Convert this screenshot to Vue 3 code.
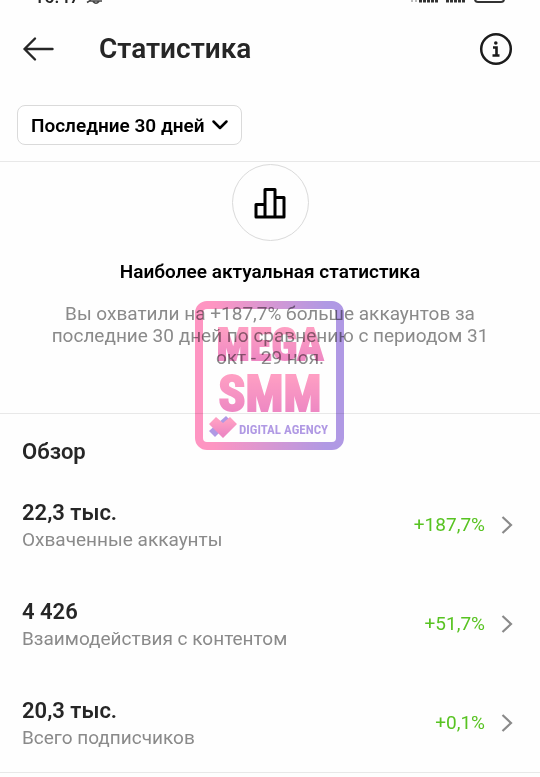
<template>
  <main class="page">
    <div class="status-bar">
      <span class="status-time">16:47</span>
      <svg class="status-bell" width="18" height="5" viewBox="0 0 18 5" fill="none" stroke="#444">
        <path d="M1 2.500L5 0M3 1H16M7 1.500Q10 5 13 1.500" stroke-width="1.500"/>
      </svg>
      <svg class="status-icons" width="98" height="5" viewBox="0 0 98 5" fill="none">
        <path d="M2 0V2M6 0V2" stroke="#bbb" stroke-width="2"/>
        <path d="M9 1H29M36 1H56" stroke="#333" stroke-width="3" stroke-dasharray="3 1"/>
        <path d="M65 -4V-1Q65 2 68 2H91Q94 2 94 -1V-4" stroke="#333" stroke-width="2"/>
      </svg>
    </div>

    <header class="header">
      <button class="icon-btn" type="button" aria-label="Назад">
        <svg width="32" height="26" viewBox="0 0 32 26" fill="none" stroke="#262626" stroke-width="2.400" stroke-linecap="round" stroke-linejoin="round">
          <path d="M13 2.500L2.500 13L13 23.500M2.500 13H30.500"/>
        </svg>
      </button>
      <h1 class="title">Статистика</h1>
      <button class="icon-btn" type="button" aria-label="Информация">
        <svg width="34" height="34" viewBox="0 0 34 34" fill="none">
          <circle cx="17" cy="17" r="14.800" stroke="#1c1c1c" stroke-width="2.500"/>
          <circle cx="16.800" cy="11" r="1.800" fill="#1c1c1c"/>
          <path d="M14 15.500H17.500V23.500M13.500 23.500H20.500" stroke="#1c1c1c" stroke-width="2.600"/>
        </svg>
      </button>
    </header>

    <div class="filter">
      <label class="period">
        <select v-model="period" class="period-select" aria-label="Период">
          <option v-for="item in periods" :key="item" :value="item">{{ item }}</option>
        </select>
        <svg class="period-arrow" width="18" height="12" viewBox="0 0 18 12" fill="none" stroke="#000" stroke-width="2.500" stroke-linecap="round" stroke-linejoin="round">
          <path d="M2.500 2.500L9 9L15.500 2.500"/>
        </svg>
      </label>
    </div>

    <section class="summary">
      <div class="summary-icon">
        <svg width="32" height="32" viewBox="0 0 32 32" fill="none" stroke="#000" stroke-width="3" stroke-linejoin="round">
          <path d="M2 30V17.500H11V30ZM11 30V2.500H21V30ZM21 30V10.500H30V30Z"/>
        </svg>
      </div>
      <h2 class="summary-title">Наиболее актуальная статистика</h2>
      <p class="summary-text">Вы охватили на +187,7% больше аккаунтов за последние 30 дней по сравнению с периодом 31 окт - 29 ноя.</p>

      <svg class="watermark" width="150" height="150" viewBox="0 0 150 150">
        <defs>
          <linearGradient id="frame" x1="0" y1="0" x2="1" y2="0">
            <stop offset="0.1" stop-color="#ff4f9a"/>
            <stop offset="0.9" stop-color="#7d56d3"/>
          </linearGradient>
          <linearGradient id="letters" x1="0" y1="0" x2="0" y2="1">
            <stop offset="0.2" stop-color="#ff5f9c"/>
            <stop offset="0.8" stop-color="#e43a9c"/>
          </linearGradient>
        </defs>
        <rect x="4" y="4" width="141" height="141" rx="8" fill="none" stroke="url(#frame)" stroke-width="8"/>
        <g fill="url(#letters)" stroke="url(#letters)" text-anchor="middle" class="logo-text logo-name">
          <text x="75" y="59" font-size="44">MEGA</text>
          <text x="75" y="110" font-size="50">SMM</text>
        </g>
        <path d="M14 130L31 115L36 120L20 136Z" fill="#7d56d3"/>
        <path d="M14 123L21 116L28 122L35 116L42 123L28 137Z" fill="url(#letters)"/>
        <text x="44" y="133" font-size="13" fill="#7d56d3" class="logo-text">DIGITAL AGENCY</text>
      </svg>
    </section>

    <section class="overview">
      <h2 class="overview-title">Обзор</h2>
      <button v-for="row in rows" :key="row.label" class="row" type="button">
        <span class="row-info">
          <span class="row-value">{{ row.value }}</span>
          <span class="row-label">{{ row.label }}</span>
        </span>
        <span class="row-change">{{ row.change }}</span>
        <svg width="12" height="20" viewBox="0 0 12 20" fill="none" stroke="#8a8a8a" stroke-width="2.200">
          <path d="M1.500 2L10 10L1.500 18"/>
        </svg>
      </button>
    </section>
  </main>
</template>

<script setup>
import { ref } from 'vue'

const periods = ['Последние 30 дней', 'Последние 7 дней']
const period = ref(periods[0])

const rows = [
  { value: '22,3 тыс.', label: 'Охваченные аккаунты', change: '+187,7%' },
  { value: '4 426', label: 'Взаимодействия с контентом', change: '+51,7%' },
  { value: '20,3 тыс.', label: 'Всего подписчиков', change: '+0,1%' }
]
</script>

<style>
body {
  margin: 0;
  background: #fefefe;
}
</style>

<style scoped>
.page {
  font-family: Roboto, "Liberation Sans", sans-serif;
  color: #262626;
}

.status-bar {
  display: flex;
  align-items: flex-end;
  height: 5px;
  padding: 0 32px 0 34px;
  overflow: hidden;
}

.status-time {
  font-size: 18px;
  line-height: 16px;
  font-weight: 500;
}

.status-bell {
  margin-left: 6px;
}

.status-icons {
  margin-left: auto;
}

.header {
  display: flex;
  align-items: center;
  height: 88px;
  padding: 0 27px 0 22px;
}

.icon-btn {
  display: flex;
  padding: 0;
  border: none;
  background: none;
  cursor: pointer;
}

.title {
  flex: 1;
  margin: 0 0 0 45px;
  font-size: 28px;
  line-height: 32px;
  font-weight: 600;
}

.filter {
  display: flex;
  padding: 12px 17px 16px;
  border-bottom: 1px solid #e8e8e8;
}

.period {
  display: grid;
  align-items: center;
}

.period-select {
  grid-area: 1 / 1;
  appearance: none;
  height: 40px;
  padding: 0 36px 0 13px;
  border: 1px solid #dadada;
  border-radius: 8px;
  background: #fff;
  color: #000;
  font-family: inherit;
  font-size: 19px;
  font-weight: 600;
}

.period-arrow {
  grid-area: 1 / 1;
  justify-self: end;
  margin-right: 13px;
  pointer-events: none;
}

.summary {
  position: relative;
  padding: 2px 40px 44px;
  border-bottom: 1px solid #e8e8e8;
  text-align: center;
}

.summary-icon {
  display: flex;
  align-items: center;
  justify-content: center;
  width: 75px;
  height: 75px;
  margin: 0 auto;
  border: 1px solid #dadada;
  border-radius: 50%;
}

.summary-title {
  margin: 20px 0;
  color: #000;
  font-size: 19px;
  line-height: 22px;
  font-weight: 600;
}

.summary-text {
  margin: 0;
  color: #8a8a8a;
  font-size: 19px;
  line-height: 22px;
}

.watermark {
  position: absolute;
  top: 139px;
  left: calc(50% - 75px);
  opacity: 0.6;
  mix-blend-mode: multiply;
  pointer-events: none;
}

.logo-text {
  font-family: "Roboto Condensed", "Liberation Sans Narrow", "Open Sans Condensed", Roboto, sans-serif;
  font-weight: 700;
}

.logo-name {
  stroke-width: 2px;
}

.overview {
  padding: 24px 27px 9px 22px;
  border-bottom: 1px solid #e8e8e8;
}

.overview-title {
  margin: 0 0 19px;
  font-size: 22px;
  line-height: 28px;
  font-weight: 600;
}

.row {
  display: flex;
  align-items: center;
  width: 100%;
  margin-bottom: 19px;
  padding: 13px 0;
  border: none;
  background: none;
  color: #262626;
  font-family: inherit;
  text-align: left;
  cursor: pointer;
}

.row:last-child {
  margin-bottom: 0;
}

.row-info {
  display: flex;
  flex: 1;
  flex-direction: column;
}

.row-value {
  font-size: 22px;
  line-height: 30px;
  font-weight: 600;
}

.row-label {
  color: #8a8a8a;
  font-size: 19px;
  line-height: 24px;
}

.row-change {
  margin-right: 16px;
  color: #58c322;
  font-size: 19px;
  line-height: 24px;
}
</style>
